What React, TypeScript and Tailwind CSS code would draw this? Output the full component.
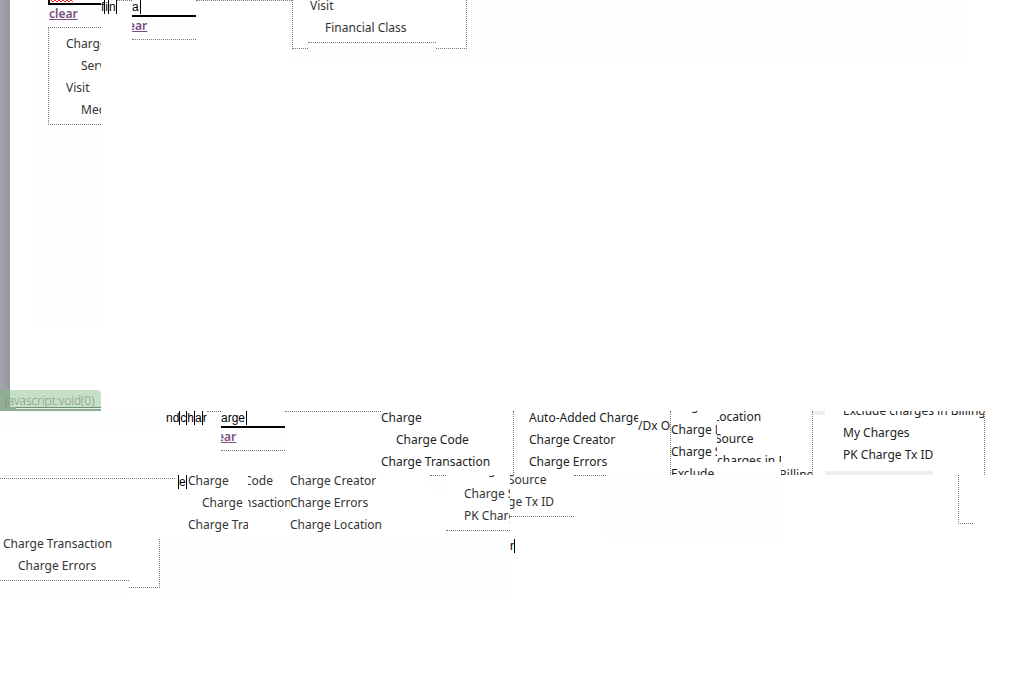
import type { ReactNode } from "react";

const dots = "border-dotted border-[#777]";

function Tile({ className = "", children }: { className?: string; children?: ReactNode }) {
  return <div className={`shrink-0 overflow-hidden whitespace-nowrap ${className}`}>{children}</div>;
}

function Items({ className = "", children }: { className?: string; children: ReactNode }) {
  return <ul className={`leading-[22px] ${className}`}>{children}</ul>;
}

function Caret() {
  return <span className="h-[14px] w-px shrink-0 bg-black" />;
}

function Fragment({ children }: { children: ReactNode }) {
  return (
    <div className="flex items-center font-['Liberation_Sans',Arial,sans-serif] text-[12px] leading-[14px] text-black">
      {children}
    </div>
  );
}

function SearchTile({ value, inputWidth, className }: { value: string; inputWidth: string; className: string }) {
  return (
    <Tile className={`w-16 ${className}`}>
      <div className="flex items-center border-b-2 border-black bg-white pb-px font-['Liberation_Sans',Arial,sans-serif] leading-[14px] text-black">
        <input
          aria-label="Filter"
          defaultValue={value}
          className={`h-[14px] shrink-0 bg-transparent p-0 text-[12px] outline-none ${inputWidth}`}
        />
        <Caret />
      </div>
      <div className={`h-[23px] border-b bg-[#fcfffe] ${dots}`}>
        <a href="#clear" className="-ml-1 font-semibold leading-[18px] text-[#7b4b84] underline">ear</a>
      </div>
    </Tile>
  );
}

function TopRow() {
  return (
    <div className="flex items-start">
      <Tile className="flex h-[411px] w-[101px] flex-col">
        <div className="flex min-h-0 flex-1">
          <div className="w-2.5 shrink-0 bg-linear-to-r from-[#a2a5ab] to-[#94979c]" />
          <div className="w-[22px] shrink-0" />
          <div className="h-[328px] min-w-0 flex-1 bg-[#fcfffe] pl-4">
            <div className="h-[5px] border-b-2 border-l-2 border-black bg-white">
              <svg width="24" height="3" className="block" aria-hidden="true">
                <path d="M1 0l2 2 2-2 2 2 2-2 2 2 2-2 2 2 2-2 2 2 2-2 2 2" fill="none" stroke="#f22" />
              </svg>
            </div>
            <a href="#clear" className="block h-[22px] pl-px font-semibold leading-[18px] text-[#7b4b84] underline">clear</a>
            <div className={`border-y border-l bg-white pb-[3px] pl-[17px] pt-[5px] ${dots}`}>
              <Items>
                <li>Charge</li>
                <li className="pl-[15px]">Service</li>
                <li>Visit</li>
                <li className="pl-[15px]">Medical</li>
              </Items>
            </div>
          </div>
        </div>
        <div className="h-[21px] rounded-tr bg-[linear-gradient(to_right,#8fae93_10px,#c5e1c5_10px)] font-['Open_Sans'] font-light text-[#858886]">
          <div className="h-[17px] pl-[5px] leading-[22px]">javascript:void(0)</div>
          <div className="h-1 bg-[#8fae93]">
            <div className="ml-4 h-0.5 border-b border-[#e2f2e2] bg-[#6f8f74]" />
          </div>
        </div>
      </Tile>
      <Tile className="flex w-[31px]">
        <Fragment>
          <span>f</span><Caret /><span>i</span><Caret /><span>n</span><Caret />
        </Fragment>
        <div className={`flex-1 border-t ${dots}`} />
      </Tile>
      <SearchTile value="a" inputWidth="w-2" className="h-10" />
      <Tile className={`h-1 w-24 border-t ${dots}`} />
      <div className="flex flex-1">
        <Tile className="w-[175px] bg-[#fcfffe]">
          <div className="flex">
            <Tile className={`h-[49px] w-4 border-b border-l bg-white ${dots}`} />
            <Tile className={`h-[43px] w-32 border-b bg-white ${dots}`}>
              <Items className="-mt-[5px] pl-0.5">
                <li>Visit</li>
                <li className="pl-[15px]">Financial Class</li>
              </Items>
            </Tile>
            <Tile className={`h-[49px] w-[31px] border-b border-r bg-white ${dots}`} />
          </div>
        </Tile>
        <div className="h-16 max-w-[499px] flex-1 bg-[#fdfffe]" />
      </div>
    </div>
  );
}

function SecondRow() {
  return (
    <div className="flex h-16 items-stretch text-[#222]">
      <Tile className="w-[166px]"><div className="h-4 bg-[#fcfffe]" /></Tile>
      <Tile className="w-[41px]">
        <Fragment>
          <span>nd</span><Caret /><span>c</span><Caret /><span>h</span><Caret /><span>a</span><Caret /><span>r</span><Caret />
        </Fragment>
      </Tile>
      <Tile className={`w-3.5 border-t ${dots}`} />
      <SearchTile value="arge" inputWidth="w-[25px]" className="" />
      <Tile className={`w-24 border-t ${dots}`} />
      <Tile className={`w-[133px] border-r ${dots}`}>
        <Items className="-mt-1">
          <li>Charge</li>
          <li className="pl-[15px]">Charge Code</li>
          <li>Charge Transaction</li>
        </Items>
      </Tile>
      <Tile className="w-[124px] pl-[15px]">
        <Items className="-mt-1">
          <li>Auto-Added Charge</li>
          <li>Charge Creator</li>
          <li>Charge Errors</li>
        </Items>
      </Tile>
      <Tile className="w-8 pt-1"><Items><li>/Dx O</li></Items></Tile>
      <Tile className={`w-[47px] border-l ${dots}`}>
        <Items className="-mt-4">
          <li className="pb-0.5 pl-5">g</li>
          <li>Charge L</li>
          <li>Charge S</li>
          <li>Exclude</li>
        </Items>
      </Tile>
      <Tile className="h-[51px] w-16">
        <Items className="-mt-[5px]">
          <li className="-ml-1">Location</li>
          <li className="-ml-0.5">Source</li>
          <li>charges in B</li>
        </Items>
      </Tile>
      <Tile className="w-[31px] pt-[53px]"><Items><li className="-ml-0.5">Billing</li></Items></Tile>
      <Tile className={`flex w-[173px] flex-col border-x ${dots}`}>
        <div className="flex flex-1 overflow-hidden">
          <div className="h-1 w-3 shrink-0 bg-[#eee]" />
          <Items className="-mt-[11px] pl-[18px]">
            <li>Exclude charges in Billing</li>
            <li>My Charges</li>
            <li>PK Charge Tx ID</li>
          </Items>
        </div>
        <div className="ml-3 h-1 w-[108px] bg-[#eee]" />
      </Tile>
    </div>
  );
}

function ThirdRow() {
  return (
    <div className="flex h-16 items-stretch">
      <Tile className="w-[178px]">
        <div className={`mr-[3px] h-1 border-b ${dots}`}>
          <div className="ml-[3px] h-px w-[120px] bg-[#eee]" />
        </div>
      </Tile>
      <Tile className="w-[9px]">
        <Fragment><Caret /><span>e</span><Caret /></Fragment>
      </Tile>
      <Tile className="w-[61px]">
        <Items className="-mt-[5px] pl-px">
          <li>Charge</li>
          <li className="pl-3.5">Charge</li>
          <li>Charge Transaction</li>
        </Items>
      </Tile>
      <Tile className="w-[42px]">
        <Items className="-mt-[5px]">
          <li className="-ml-1">Code</li>
          <li className="-ml-1">nsaction</li>
        </Items>
      </Tile>
      <Tile className="w-[140px]">
        <Items className="-mt-[5px]">
          <li>Charge Creator</li>
          <li>Charge Errors</li>
          <li>Charge Location</li>
        </Items>
      </Tile>
      <Tile className={`h-4 w-4 border-t bg-[#fcfffe] ${dots}`} />
      <Tile className={`h-14 w-16 border-b ${dots}`}>
        <Items className="-mt-4 pl-[18px]">
          <li className="pb-0.5 pl-6">g</li>
          <li>Charge S</li>
          <li>PK Charge</li>
        </Items>
      </Tile>
      <Tile className={`h-[42px] w-16 border-b ${dots}`}>
        <Items className="-mt-1.5">
          <li className="-ml-0.5">Source</li>
          <li className="-ml-0.5">ge Tx ID</li>
        </Items>
      </Tile>
      <Tile className={`w-8 border-t ${dots}`} />
      <Tile className="w-[175px] bg-[#fcfffe]" />
      <Tile className="w-[177px]" />
      <Tile className={`h-[49px] w-[15px] border-b border-l ${dots}`} />
    </div>
  );
}

function BottomRow() {
  return (
    <div className="flex items-start">
      <Tile className="w-[129px] bg-[#fcfffe] pb-4">
        <div className={`border-b bg-white pb-[3px] pl-[3px] ${dots}`}>
          <Items className="-mt-1.5">
            <li>Charge Transaction</li>
            <li className="pl-[15px]">Charge Errors</li>
          </Items>
        </div>
      </Tile>
      <Tile className={`h-[49px] w-[31px] border-b border-r ${dots}`} />
      <Tile className="h-[58px] w-[350px] bg-[#fcfffe]" />
      <Tile className="w-2"><Fragment><span>r</span><Caret /></Fragment></Tile>
    </div>
  );
}

export default function App() {
  return (
    <main className="min-h-screen overflow-hidden bg-white font-['Noto_Sans',Tahoma,sans-serif] text-[12px] text-[#333]">
      <TopRow />
      <SecondRow />
      <ThirdRow />
      <BottomRow />
    </main>
  );
}
